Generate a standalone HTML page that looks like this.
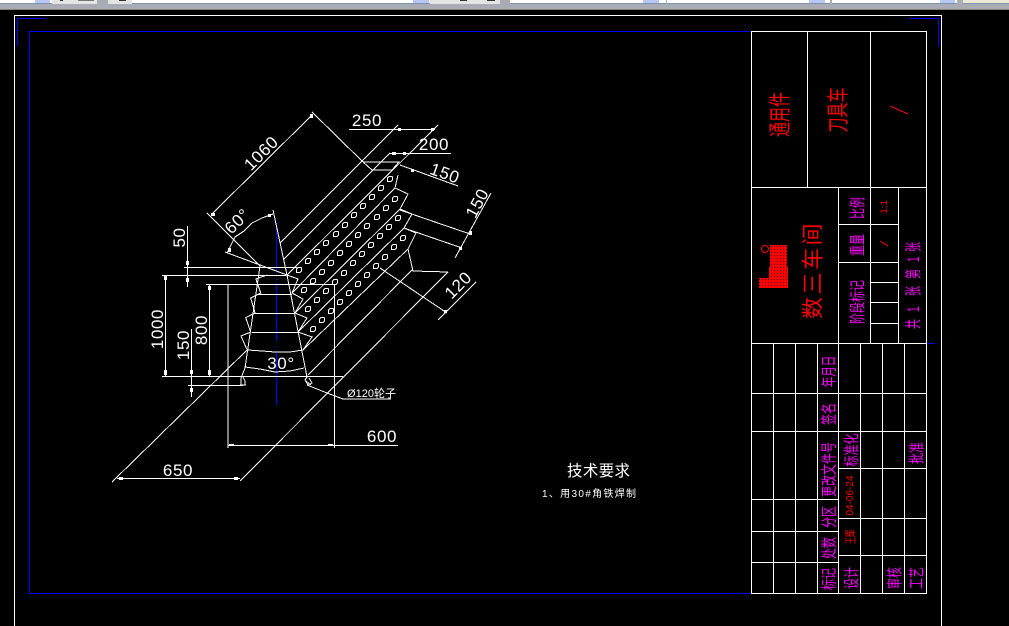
<!DOCTYPE html>
<html lang="zh">
<head>
<meta charset="utf-8">
<title>CAD</title>
<style>
html,body{margin:0;padding:0;background:#000;width:1009px;height:626px;overflow:hidden}
svg{display:block;position:absolute;left:0;top:0}
.l{fill:none;stroke:#fff;stroke-width:1;shape-rendering:crispEdges}
.b{fill:none;stroke:#0000ff;stroke-width:1;shape-rendering:crispEdges}
.r{fill:none;stroke:#ff0000;stroke-width:1;shape-rendering:crispEdges}
.d{font:17px "Liberation Sans",sans-serif;fill:#fff;text-anchor:middle;letter-spacing:.6px}
.m{font-family:"Liberation Sans","WenQuanYi Zen Hei","Noto Sans CJK SC",sans-serif;fill:#ff00ff;text-anchor:middle}
.e{font-family:"Liberation Sans","WenQuanYi Zen Hei","Noto Sans CJK SC",sans-serif;fill:#ff0000;text-anchor:middle}
.w{font-family:"Liberation Sans","WenQuanYi Zen Hei","Noto Sans CJK SC",sans-serif;fill:#fff}
</style>
</head>
<body>
<svg width="1009" height="626" viewBox="0 0 1009 626" xmlns="http://www.w3.org/2000/svg">
<defs>
<pattern id="dots" width="3" height="3" patternUnits="userSpaceOnUse"><rect width="3" height="3" fill="#ff0000"/><rect width="1" height="1" fill="#500000"/></pattern>
<path id="h" d="M-2.5,2.5 L-2.5,-1 L-1,-2.5 L2,-2.5 L2.5,-2 L2.5,1 L1,2.5 Z" fill="#000" stroke="#fff" stroke-width="1"/>
</defs>
<rect width="1009" height="626" fill="#000"/>

<!-- top bar -->
<rect width="1009" height="9" fill="#a9abb5"/>
<rect y="9" width="1009" height="1" fill="#85856f"/>
<rect x="0" y="0" width="52" height="3" fill="#fff"/><rect x="35" y="0" width="15" height="3" fill="#b5c7f2"/>
<rect x="52" y="0" width="45" height="4" fill="#e4e4e4"/><rect x="60" y="0" width="3" height="1" fill="#333"/><rect x="78" y="0" width="16" height="1" fill="#777"/>
<rect x="108" y="0" width="24" height="4" fill="#e4e4e4"/><rect x="119" y="0" width="7" height="1" fill="#333"/>
<rect x="132" y="0" width="298" height="3" fill="#fff"/><rect x="413" y="0" width="16" height="3" fill="#b5c7f2"/>
<rect x="430" y="0" width="70" height="4" fill="#e4e4e4"/><rect x="460" y="0" width="7" height="1" fill="#333"/><rect x="487" y="0" width="8" height="1" fill="#333"/>
<rect x="510" y="0" width="156" height="3" fill="#fff"/><rect x="643" y="0" width="16" height="3" fill="#b5c7f2"/>
<rect x="667" y="0" width="163" height="3" fill="#fff"/><rect x="809" y="0" width="16" height="3" fill="#b5c7f2"/>
<rect x="832" y="0" width="125" height="3" fill="#fff"/><rect x="940" y="0" width="15" height="3" fill="#b5c7f2"/>
<rect x="963" y="0" width="46" height="3" fill="#ecebd8"/>
<path d="M0 3.5H52M132 3.5H430M510 3.5H666M667 3.5H830M832 3.5H957M963 3.5H1009" stroke="#7f93ad" stroke-width="1" fill="none"/>

<!-- frames -->
<path class="l" d="M14.5 626V15.5H941.5V626"/>
<path class="b" d="M17.5 46V18.5H46M910 18.5H938.5V46M751 31.5H29.5V593.5H751M927 343.5H935"/>

<!-- title block -->
<path class="l" d="M751.5 31.5H926.5V593.5H751.5ZM807.5 31.5V187.5M870.5 31.5V187.5M751.5 187.5H926.5M838.5 187.5V343.5M870.5 187.5V343.5M898.5 187.5V343.5M838.5 224.5H898.5M838.5 262.5H898.5M870.5 282.5H898.5M870.5 302.5H898.5M870.5 323.5H898.5M751.5 343.5H926.5"/>
<path class="l" d="M773.5 343.5V593.5M795.5 343.5V593.5M817.5 343.5V593.5M838.5 343.5V593.5M860.5 343.5V593.5M882.5 343.5V593.5M904.5 343.5V593.5M751.5 393.5H926.5M751.5 431.5H926.5M838.5 468.5H926.5M751.5 499.5H838.5M838.5 518.5H926.5M751.5 531.5H838.5M838.5 555.5H926.5M751.5 562.5H838.5"/>

<!-- red title text -->
<text class="e" font-size="15" transform="translate(788,114.5) rotate(-90) scale(1,1.5)">通用件</text>
<text class="e" font-size="15" transform="translate(846,110) rotate(-90) scale(1,1.5)">刀具车</text>
<path class="r" d="M890 106L908 114M880 241L888 246"/>
<text class="e" font-size="22" letter-spacing="2.5" transform="translate(820.5,270) rotate(-90)">数三车间</text>
<text class="e" font-size="7" transform="translate(887,207) rotate(-90) scale(1.4,1.3)" font-family="Liberation Sans">1:1</text>
<text class="e" font-size="10" transform="translate(853,495.5) rotate(-90)">04-06-24</text>
<text class="e" font-size="7" transform="translate(854.5,537) rotate(-90) scale(1,1.6)">王輝</text>

<!-- logo -->
<rect x="770" y="245" width="17" height="22" fill="url(#dots)"/>
<rect x="769" y="267" width="19" height="21" fill="url(#dots)"/>
<rect x="759" y="278" width="10" height="10" fill="url(#dots)"/>
<circle cx="765" cy="249" r="3.5" fill="none" stroke="#ff0000"/>

<!-- magenta text -->
<g>
<text class="m" font-size="11" transform="translate(863,208) rotate(-90) scale(1,1.45)">比例</text>
<text class="m" font-size="11" transform="translate(863,245) rotate(-90) scale(1,1.45)">重量</text>
<text class="m" font-size="11" transform="translate(863,302) rotate(-90) scale(1,1.45)">阶段标记</text>
<text class="m" font-size="10" style="text-anchor:start" x="0 17 33 50 67 77" transform="translate(919,329) rotate(-90) scale(1,1.65)">共1张第1张</text>
<text class="m" font-size="10.5" transform="translate(834.5,371.5) rotate(-90) scale(1,1.5)">年月日</text>
<text class="m" font-size="11" transform="translate(834.5,414) rotate(-90) scale(1,1.45)">签名</text>
<text class="m" font-size="11" transform="translate(834.5,469.5) rotate(-90) scale(1,1.45)">更改文件号</text>
<text class="m" font-size="11" transform="translate(834.5,517) rotate(-90) scale(1,1.45)">分区</text>
<text class="m" font-size="11" transform="translate(834.5,548) rotate(-90) scale(1,1.45)">处数</text>
<text class="m" font-size="11" transform="translate(834.5,579) rotate(-90) scale(1,1.45)">标记</text>
<text class="m" font-size="11" transform="translate(857,450) rotate(-90) scale(1,1.45)">标准化</text>
<text class="m" font-size="11" transform="translate(857,578) rotate(-90) scale(1,1.45)">设计</text>
<text class="m" font-size="11" transform="translate(900,578) rotate(-90) scale(1,1.45)">审核</text>
<text class="m" font-size="11" transform="translate(922,578) rotate(-90) scale(1,1.45)">工艺</text>
<text class="m" font-size="11" transform="translate(922,453) rotate(-90) scale(1,1.45)">批准</text>
</g>

<!-- blue centre line -->
<path class="b" d="M276.5 222V273M276.5 279V280M276.5 283V341M276.5 346V347M276.5 353V405"/>

<!-- dimensions -->
<path class="l" d="M212 214L312 115M207 213L260 266M312 112L363 162"/>
<path class="l" d="M227 253L232 243L235 237L244 231L252 223L262 218L270 215L273 214"/>
<path class="l" d="M225 252L287 275M273 210L287 275L307 377M260 266L245 368L241 378"/>
<path class="l" d="M184 267.5H297M162 275.5H286M206 284.5H334M228 284V448M334.5 279V448M162 376.5H343M188 385.5H243"/>
<path class="l" d="M165.5 275V376M209.5 284V376M191.5 329V397M187.5 226V287"/>
<path class="l" d="M228 445.5H398M117 478.5H240"/>
<path class="l" d="M349 129.5H435M390 153.5H451M400 165L458 186M491 193L455 258M476 282L438 320"/>
<path class="l" d="M400 210L470 234M404 228L462 248M380 268L447 313"/>
<path class="l" d="M112 482L247 350M240 481L448 272M308 375L412 270"/>
<path class="l" d="M307 385L327 393L343 399H391"/>

<!-- arrow ticks -->
<g fill="#fff">
<rect x="211" y="213" width="4" height="3"/><rect x="310" y="114" width="3" height="4"/>
<rect x="228" y="248" width="3" height="4"/><rect x="268" y="214" width="3" height="3"/>
<rect x="186" y="261" width="3" height="4"/><rect x="186" y="278" width="3" height="4"/>
<rect x="164" y="276" width="3" height="4"/><rect x="164" y="370" width="3" height="5"/>
<rect x="208" y="286" width="3" height="4"/><rect x="208" y="370" width="3" height="5"/>
<rect x="190" y="370" width="3" height="4"/><rect x="190" y="388" width="3" height="4"/>
<rect x="229" y="444" width="5" height="2"/><rect x="328" y="444" width="5" height="2"/>
<rect x="119" y="477" width="4" height="3"/><rect x="234" y="477" width="4" height="3"/>
<rect x="398" y="128" width="3" height="3"/><rect x="431" y="128" width="3" height="3"/>
<rect x="392" y="152" width="4" height="3"/><rect x="403" y="152" width="3" height="3"/>
<rect x="411" y="169" width="3" height="3"/><rect x="469" y="231" width="3" height="4"/>
<rect x="459" y="247" width="3" height="3"/><rect x="444" y="310" width="3" height="3"/>
</g>

<!-- trapezoid ladder -->
<path class="l" d="M257 294.5H292M254 313.5H295M252 332.5H298"/>
<path class="l" d="M248 350L262 351L275 352L290 352L303 350"/>
<path class="l" d="M245 367L260 369L275 372L290 371L304 368"/>
<path class="l" d="M266.7 275L256 279L260.7 293L250.7 298L255 312.7L245.7 317.7L250.7 332L241 336L246.7 349"/>
<path class="l" d="M287 275L298 279L292 293L303 299L295 313L307 318L298 332L312 337L303 350"/>
<!-- wheels -->
<path class="l" d="M241 378L241 385L245 385L245 381L243 377M240 385H246"/>
<path class="l" d="M307 377L305 380L308 385L312 383L309 378M306 381L311 385"/>

<!-- rack -->
<path class="l" d="M280 243L398 125M283 260L390 153M287 275L438 125"/>
<path class="l" d="M292 293L395 188M295 313L400 209M298 332L404 228M303 350L408 249"/>
<path class="l" d="M398 175L395 188L408 194L400 209L412 214L404 228L416 233L408 249L413 271L448 272"/>
<path class="l" d="M363 162H399L392 170H372L363 162"/>

<g>
<use href="#h" x="390" y="179"/><use href="#h" x="381" y="188"/><use href="#h" x="372" y="197"/><use href="#h" x="363" y="206"/><use href="#h" x="354" y="215"/><use href="#h" x="345" y="225"/><use href="#h" x="336" y="234"/><use href="#h" x="326" y="243"/><use href="#h" x="317" y="252"/><use href="#h" x="308" y="261"/><use href="#h" x="299" y="270"/>
<use href="#h" x="395" y="199"/><use href="#h" x="386" y="208"/><use href="#h" x="377" y="217"/><use href="#h" x="367" y="226"/><use href="#h" x="358" y="235"/><use href="#h" x="349" y="244"/><use href="#h" x="340" y="253"/><use href="#h" x="331" y="263"/><use href="#h" x="322" y="272"/><use href="#h" x="313" y="281"/><use href="#h" x="304" y="290"/>
<use href="#h" x="398" y="218"/><use href="#h" x="389" y="227"/><use href="#h" x="380" y="236"/><use href="#h" x="371" y="245"/><use href="#h" x="362" y="254"/><use href="#h" x="353" y="263"/><use href="#h" x="344" y="273"/><use href="#h" x="335" y="282"/><use href="#h" x="326" y="291"/><use href="#h" x="317" y="300"/><use href="#h" x="308" y="309"/>
<use href="#h" x="403" y="238"/><use href="#h" x="394" y="247"/><use href="#h" x="385" y="257"/><use href="#h" x="376" y="266"/><use href="#h" x="367" y="275"/><use href="#h" x="358" y="284"/><use href="#h" x="349" y="293"/><use href="#h" x="340" y="302"/><use href="#h" x="331" y="311"/><use href="#h" x="322" y="320"/><use href="#h" x="313" y="329"/>
</g>

<!-- dimension labels -->
<text class="d" transform="translate(261,153) rotate(-45)" y="6">1060</text>
<text class="d" transform="translate(237,221) rotate(-45)" y="6">60°</text>
<text class="d" x="367" y="126">250</text>
<text class="d" x="434" y="150">200</text>
<text class="d" transform="translate(445,173) rotate(20)" y="6">150</text>
<text class="d" transform="translate(477,203) rotate(-62)" y="6">150</text>
<text class="d" transform="translate(458,285) rotate(-45)" y="6">120</text>
<text class="d" transform="translate(179,237.5) rotate(-90)" y="6">50</text>
<text class="d" transform="translate(157,329) rotate(-90)" y="6">1000</text>
<text class="d" transform="translate(183,345) rotate(-90)" y="6">150</text>
<text class="d" transform="translate(201,330) rotate(-90)" y="6">800</text>
<text class="d" x="281" y="369">30°</text>
<text class="d" x="382" y="442">600</text>
<text class="d" x="178" y="476">650</text>
<text class="w" x="347" y="397" font-size="11" textLength="49" lengthAdjust="spacing">Ø120轮子</text>

<!-- tech notes -->
<text class="w" x="567" y="476" font-size="15.5" textLength="63" lengthAdjust="spacing">技术要求</text>
<text class="w" x="542" y="497" font-size="10" textLength="94" lengthAdjust="spacing">1、用30#角铁焊制</text>
</svg>
</body>
</html>
